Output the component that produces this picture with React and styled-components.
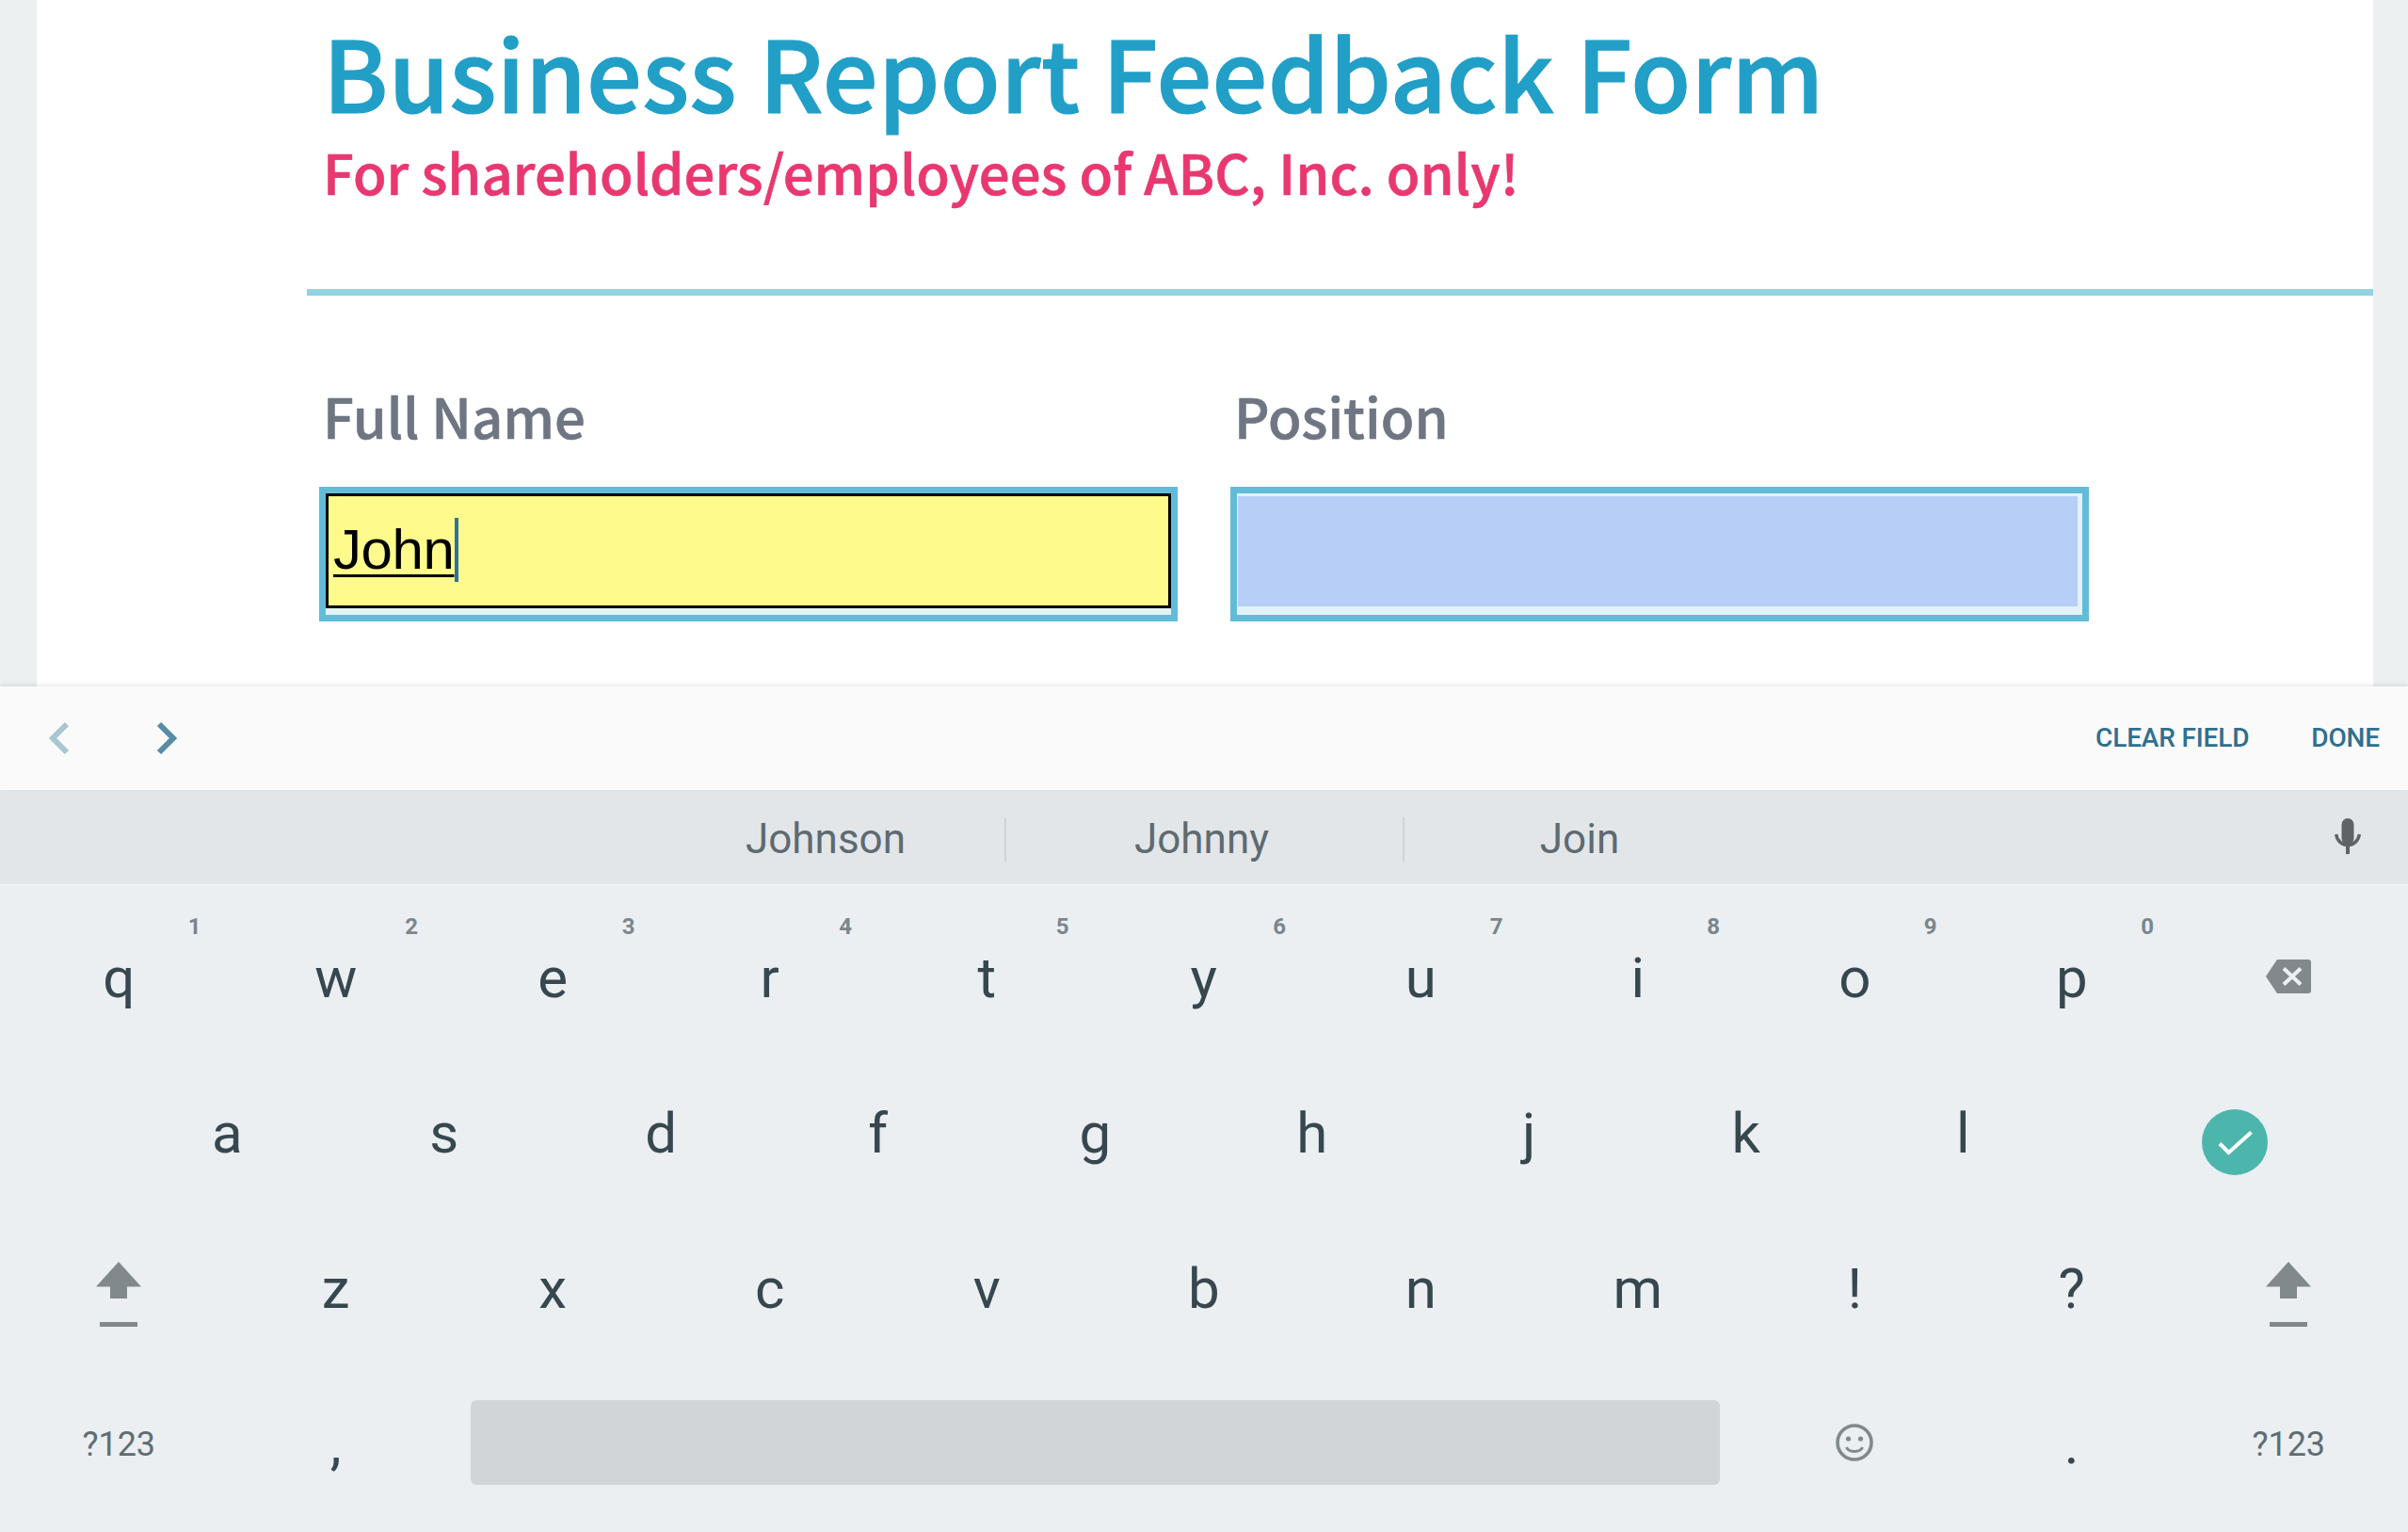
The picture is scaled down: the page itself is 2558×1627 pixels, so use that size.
import React from 'react';
import styled, { createGlobalStyle } from 'styled-components';

const Global = createGlobalStyle`
  html, body { margin: 0; padding: 0; height: 100%; overflow: hidden; }
  #root { height: 100%; }
`;

const HEAD = `"Noto Sans CJK SC", "Noto Sans", sans-serif`;
const UI = `Roboto, "Liberation Sans", sans-serif`;

const Screen = styled.div`
  width: 2558px;
  height: 1627px;
  display: flex;
  flex-direction: column;
  background: #ecf0f1;
  overflow: hidden;
`;
const PageArea = styled.div`
  height: 729px;
  flex: none;
  padding: 0 37px 0 39px;
  box-sizing: border-box;
`;
const Sheet = styled.main`
  height: 100%;
  background: #fff;
  padding-left: 287px;
  overflow: hidden;
`;
const Header = styled.header`
  height: 314px;
  box-sizing: border-box;
  border-bottom: 7px solid #93d2df;
  padding: 12px 0 0 17px;
`;
const Title = styled.h1`
  margin: 0 0 9px;
  font: 500 104px/126px ${HEAD};
  letter-spacing: 0.3px;
  -webkit-text-stroke: 1.2px #219fc7;
  color: #219fc7;
  white-space: nowrap;
`;
const Subtitle = styled.h2`
  margin: 0;
  font: 500 58px/70px ${HEAD};
  letter-spacing: 0.05px;
  -webkit-text-stroke: 0.6px #e8386f;
  color: #e8386f;
  white-space: nowrap;
`;
const FieldRow = styled.div`
  display: flex;
  gap: 56px;
  padding: 92px 0 0 13px;
`;
const FieldGroup = styled.div`
  width: 912px;
  display: flex;
  flex-direction: column;
`;
const Label = styled.label`
  font: 500 58px/70px ${HEAD};
  -webkit-text-stroke: 0.6px #6f7683;
  color: #6f7683;
  padding-left: 4px;
  margin-bottom: 41px;
  white-space: nowrap;
`;
const FieldFrame = styled.div`
  height: 143px;
  box-sizing: border-box;
  border: 7px solid #62bcd9;
  background: #e1f3f7;
  display: flex;
  padding: ${p => (p.$focused ? '0 0 7px 0' : '3px 5px 9px 1px')};
`;
const FocusedInput = styled.div`
  flex: 1;
  box-sizing: border-box;
  border: 3px solid #000;
  background: #fefa8c;
  display: flex;
  align-items: center;
  padding: 0 0 2px 5px;
  font: 400 60px/68px "Liberation Sans", Arial, sans-serif;
  color: #000;
`;
const ComposingText = styled.span`
  position: relative;
  display: inline-block;
  text-decoration: underline;
  text-decoration-thickness: 3px;
  text-underline-offset: 6px;
  letter-spacing: -0.4px;
`;
const Caret = styled.i`
  display: block;
  width: 4px;
  height: 68px;
  background: #2f7299;
`;
const EmptyInput = styled.div`
  flex: 1;
  background: #b7cff6;
`;

const Toolbar = styled.div`
  height: 110px;
  flex: none;
  box-sizing: border-box;
  background: #fafafa;
  box-shadow: 0 -2px 4px rgba(0, 0, 0, 0.09);
  position: relative;
  display: flex;
  align-items: center;
  padding: 0 30px 0 52px;
`;
const Chevrons = styled.div`
  display: flex;
  gap: 92px;
`;
const ToolActions = styled.div`
  margin-left: auto;
  display: flex;
  gap: 66px;
`;
const ToolAction = styled.span`
  font: 500 28px/32px ${UI};
  letter-spacing: -0.15px;
  color: #2f6f8f;
  white-space: nowrap;
`;
const Suggestions = styled.div`
  height: 100px;
  flex: none;
  box-sizing: border-box;
  background: #e2e6e9;
  display: flex;
  align-items: center;
  padding: 5px 50px 0 677px;
`;
const Suggestion = styled.div`
  width: ${p => p.$w}px;
  height: 47px;
  box-sizing: border-box;
  border-left: ${p => (p.$divided ? '2px solid #ced3d6' : 'none')};
  display: flex;
  align-items: center;
  justify-content: center;
  padding-right: ${p => p.$shift || 0}px;
  font: 400 44px/47px ${UI};
  color: #5f6a70;
  margin-right: ${p => p.$mr || 0}px;
`;
const MicWrap = styled.div`
  margin-left: auto;
  height: 38px;
  margin-bottom: 7px;
`;
const Keyboard = styled.div`
  flex: 1;
  border-top: 2px solid #f0f3f5;
  background: #ebeff2;
  padding: 13px 11px 0;
`;
const KeyRow = styled.div`
  height: 165px;
  display: grid;
  grid-template-columns: ${p => p.$cols};
  padding-left: ${p => p.$indent || 0}px;
`;
const Key = styled.div`
  position: relative;
  display: flex;
  align-items: center;
  justify-content: center;
  font: 400 60px/70px ${UI};
  color: #37474f;
  padding-top: 5px;
  box-sizing: border-box;
`;
const IconKey = styled(Key)`
  padding-top: 0;
`;
const FuncKey = styled(Key)`
  font-size: 36px;
  color: #5f6d72;
  padding-top: 5px;
`;
const Hint = styled.span`
  position: absolute;
  top: 18px;
  right: 28px;
  font: 700 24px/24px ${UI};
  color: #7a868c;
`;
const SpaceKey = styled.div`
  grid-column: span 6;
  display: flex;
  padding: 0 28px;
  align-items: center;
`;
const SpaceBar = styled.div`
  flex: 1;
  height: 90px;
  border-radius: 6px;
  background: #d1d5d8;
`;
const IconShift = styled.svg`
  margin-top: ${p => p.$mt || 0}px;
  display: block;
`;

const ChevronLeft = () => (
  <svg width="22" height="36" viewBox="0 0 22 36"><path d="M19 3 L4 18 L19 33" fill="none" stroke="#a9c7d2" strokeWidth="6" strokeLinecap="butt" /></svg>
);
const ChevronRight = () => (
  <svg width="22" height="36" viewBox="0 0 22 36"><path d="M3 3 L18 18 L3 33" fill="none" stroke="#568ca5" strokeWidth="6" strokeLinecap="butt" /></svg>
);
const Mic = () => (
  <svg width="28" height="38" viewBox="0 0 28 38" style={{ display: 'block' }}>
    <rect x="7.5" y="0" width="13" height="28" rx="6.5" fill="#5f6367" />
    <path d="M1.7 17 C2.5 24 8 28.5 14 28.5 C20 28.5 25.5 24 26.3 17" fill="none" stroke="#5f6367" strokeWidth="3.4" />
    <rect x="12" y="28" width="4" height="10" fill="#5f6367" />
  </svg>
);
const Backspace = () => (
  <IconShift width="48" height="36" viewBox="0 0 48 36">
    <path d="M12 0 H45 a3 3 0 0 1 3 3 V33 a3 3 0 0 1 -3 3 H12 L0 18 Z" fill="#81898d" />
    <path d="M19 9.5 L37 26.5 M37 9.5 L19 26.5" stroke="#ecf0f1" strokeWidth="4" />
  </IconShift>
);
const Enter = () => (
  <IconShift $mt={22} width="70" height="70" viewBox="0 0 70 70">
    <circle cx="35" cy="35" r="35" fill="#4db6ac" />
    <path d="M19 36.5 L28.5 46 L52.5 24.5" fill="none" stroke="#fff" strokeWidth="4" />
  </IconShift>
);
const Shift = ({ bar }) => (
  <IconShift $mt={16} width="48" height="69" viewBox="0 0 48 69">
    <path d="M24 0 L48 26.5 H33 V39 H15 V26.5 H0 Z" fill="#81898d" />
    <rect x={24 - bar / 2} y="64" width={bar} height="5" fill="#81898d" />
  </IconShift>
);
const Smiley = () => (
  <IconShift width="40" height="40" viewBox="0 0 40 40">
    <circle cx="20" cy="20" r="18" fill="none" stroke="#81898d" strokeWidth="3.6" />
    <circle cx="13.5" cy="16" r="2.6" fill="#81898d" />
    <circle cx="26.5" cy="16" r="2.6" fill="#81898d" />
    <path d="M11.5 25 C14 31 26 31 28.5 25" fill="none" stroke="#81898d" strokeWidth="3" />
  </IconShift>
);

const COL = '230.5px';
const row1 = [['q', '1'], ['w', '2'], ['e', '3'], ['r', '4'], ['t', '5'], ['y', '6'], ['u', '7'], ['i', '8'], ['o', '9'], ['p', '0']];
const row2 = ['a', 's', 'd', 'f', 'g', 'h', 'j', 'k', 'l'];
const row3 = ['z', 'x', 'c', 'v', 'b', 'n', 'm', '!', '?'];

export default function App() {
  return (
    <Screen>
      <Global />
      <PageArea>
        <Sheet>
          <Header>
            <Title>Business Report Feedback Form</Title>
            <Subtitle>For shareholders/employees of ABC, Inc. only!</Subtitle>
          </Header>
          <FieldRow>
            <FieldGroup>
              <Label>Full Name</Label>
              <FieldFrame $focused>
                <FocusedInput>
                  <ComposingText>John</ComposingText>
                  <Caret />
                </FocusedInput>
              </FieldFrame>
            </FieldGroup>
            <FieldGroup>
              <Label>Position</Label>
              <FieldFrame>
                <EmptyInput />
              </FieldFrame>
            </FieldGroup>
          </FieldRow>
        </Sheet>
      </PageArea>
      <Toolbar>
        <Chevrons>
          <ChevronLeft />
          <ChevronRight />
        </Chevrons>
        <ToolActions>
          <ToolAction>CLEAR FIELD</ToolAction>
          <ToolAction>DONE</ToolAction>
        </ToolActions>
      </Toolbar>
      <Suggestions>
        <Suggestion $w={400} $mr={-10}>Johnson</Suggestion>
        <Suggestion $w={423} $divided $shift={6}>Johnny</Suggestion>
        <Suggestion $w={374} $divided>Join</Suggestion>
        <MicWrap><Mic /></MicWrap>
      </Suggestions>
      <Keyboard>
        <KeyRow $cols={`repeat(11, ${COL})`}>
          {row1.map(([k, h]) => (
            <Key key={k}>{k}<Hint>{h}</Hint></Key>
          ))}
          <IconKey><Backspace /></IconKey>
        </KeyRow>
        <KeyRow $cols={`repeat(9, ${COL}) 1fr`} $indent={115}>
          {row2.map(k => <Key key={k}>{k}</Key>)}
          <IconKey><Enter /></IconKey>
        </KeyRow>
        <KeyRow $cols={`repeat(11, ${COL})`}>
          <IconKey><Shift bar={40} /></IconKey>
          {row3.map(k => <Key key={k}>{k}</Key>)}
          <IconKey><Shift bar={40} /></IconKey>
        </KeyRow>
        <KeyRow $cols={`repeat(11, ${COL})`}>
          <FuncKey>?123</FuncKey>
          <Key>,</Key>
          <SpaceKey><SpaceBar /></SpaceKey>
          <IconKey><Smiley /></IconKey>
          <Key>.</Key>
          <FuncKey>?123</FuncKey>
        </KeyRow>
      </Keyboard>
    </Screen>
  );
}
